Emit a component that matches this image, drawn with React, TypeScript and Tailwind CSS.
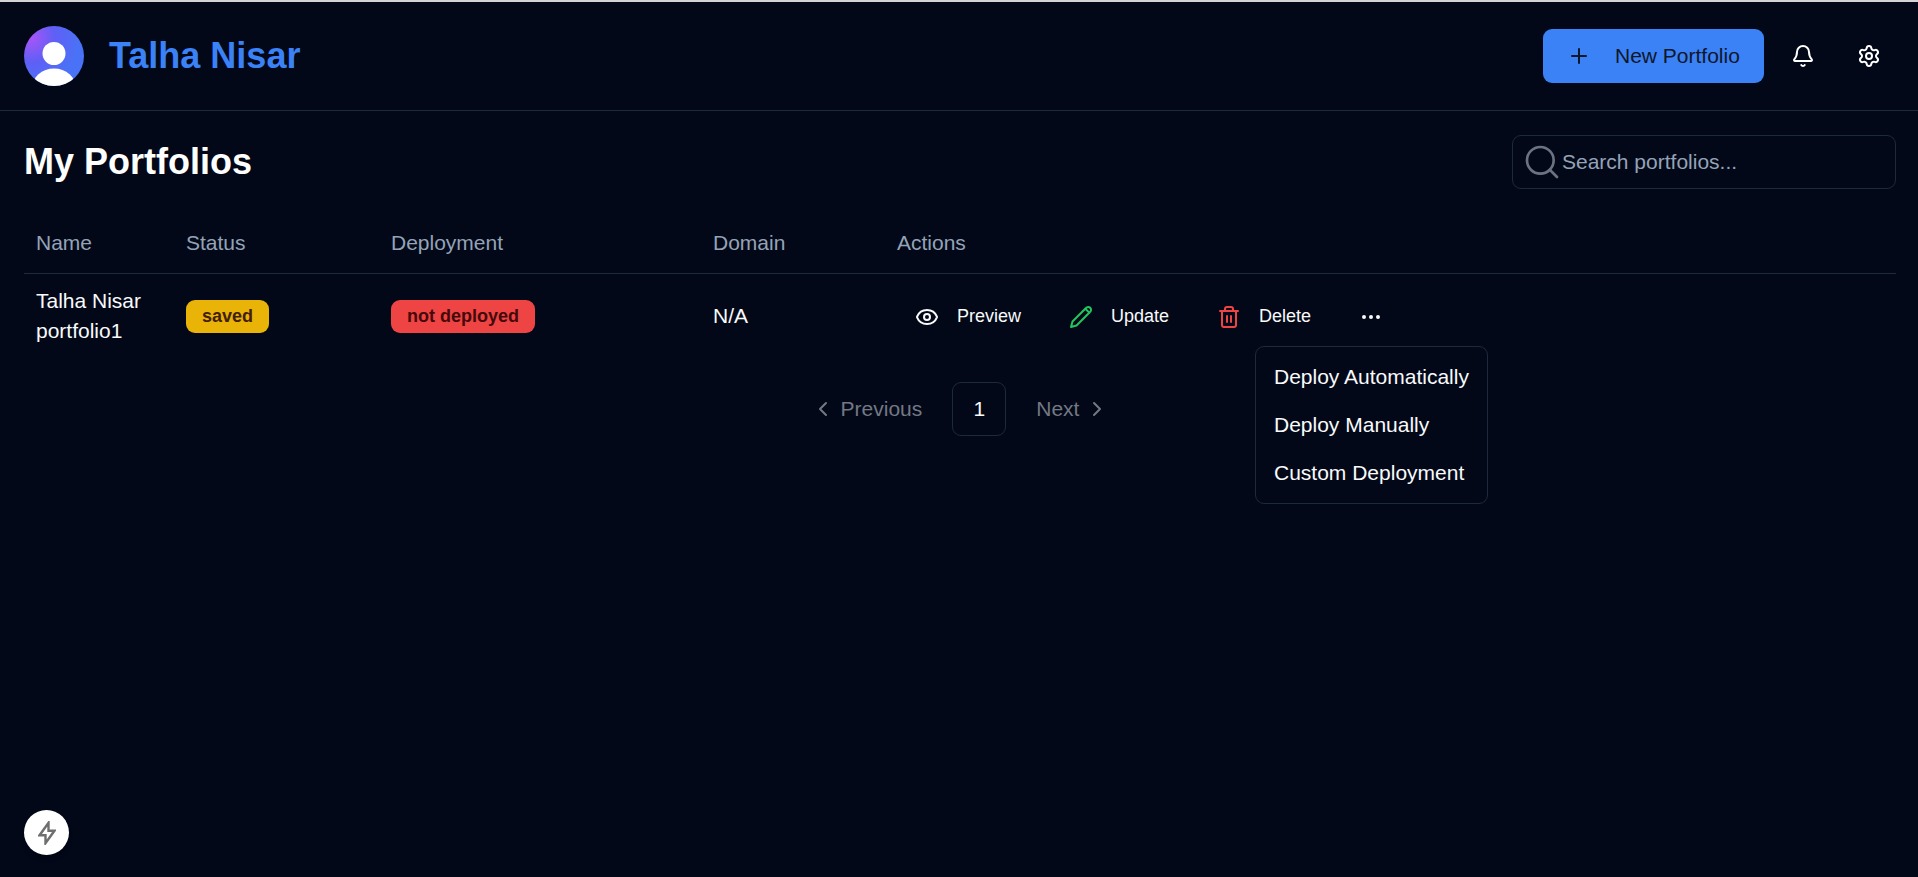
import { Bell, ChevronLeft, ChevronRight, Ellipsis, Eye, Plus, Search, Settings, Trash2 } from "lucide-react";

function Avatar() {
  return (
    <svg width="60" height="60" viewBox="0 0 60 60" className="shrink-0 block">
      <defs>
        <radialGradient id="av" cx="0.12" cy="0.2" r="0.8">
          <stop offset="0" stopColor="#a855f7" />
          <stop offset="0.5" stopColor="#5f5ff6" />
          <stop offset="1" stopColor="#4a72f6" />
        </radialGradient>
        <clipPath id="avc"><circle cx="30" cy="30" r="30" /></clipPath>
      </defs>
      <circle cx="30" cy="30" r="30" fill="url(#av)" />
      <g clipPath="url(#avc)">
        <circle cx="30" cy="27.5" r="11.5" fill="#fff" />
        <ellipse cx="30" cy="62" rx="22" ry="19.5" fill="#fff" />
      </g>
    </svg>
  );
}

function PencilIcon() {
  return (
    <svg width="24" height="24" viewBox="0 0 24 24" fill="none" stroke="#22c55e" strokeWidth="2" strokeLinecap="round" strokeLinejoin="round" className="shrink-0">
      <path d="M17 3a2.85 2.83 0 1 1 4 4L7.5 20.5 2 22l1.5-5.5Z" />
      <path d="m16.6 4 3.4 3.4" />
    </svg>
  );
}

function BoltIcon() {
  return (
    <svg width="18" height="24" viewBox="0 0 18 24" fill="none" stroke="#6f6f6f" strokeWidth="2.4" strokeLinejoin="miter" className="shrink-0">
      <path d="M10.5 1.8V9.8H16.4L7.5 22.2V14.2H1.6Z" />
    </svg>
  );
}

function ActionButton({ icon, label }: { icon: React.ReactNode; label: string }) {
  return (
    <button className="h-[54px] px-[18px] flex items-center gap-[18px] text-[18px] leading-[27px] text-[#f8fafc] rounded-[9px]">
      {icon}
      <span>{label}</span>
    </button>
  );
}

export default function App() {
  return (
    <div className="relative h-[877px] overflow-hidden bg-[#020817] text-[#f8fafc] font-['Liberation_Sans',Arial,sans-serif]">
      <div className="h-[2px] bg-[#d4d4d4]" />
      <header className="h-[109px] pl-[24px] pr-[22px] flex items-center justify-between border-b border-[#1e293b]">
        <div className="flex items-center gap-[25px]">
          <Avatar />
          <h1 className="text-[36px] leading-[54px] font-bold text-[#3b82f6]">Talha Nisar</h1>
        </div>
        <div className="flex items-center gap-[12px]">
          <button className="w-[221px] h-[54px] pl-[24px] flex items-center gap-[24px] rounded-[9px] bg-[#3b82f6] text-[#0f172a] text-[21px] leading-[30px]">
            <Plus size={24} strokeWidth={2} className="shrink-0" />
            <span>New Portfolio</span>
          </button>
          <button className="w-[54px] h-[54px] flex items-center justify-center text-white">
            <Bell size={24} />
          </button>
          <button className="w-[54px] h-[54px] flex items-center justify-center text-white">
            <Settings size={24} />
          </button>
        </div>
      </header>

      <main className="pl-[24px] pr-[22px] pt-[24px]">
        <div className="flex items-center justify-between h-[54px]">
          <h2 className="text-[36px] leading-[54px] font-bold text-white">My Portfolios</h2>
          <div className="w-[384px] h-[54px] rounded-[9px] border border-[#1e293b] flex items-center pl-[9px]">
            <Search size={40} strokeWidth={1.6} className="text-[#6b7280] shrink-0" />
            <span className="text-[21px] leading-[30px] text-[#94a3b8]">Search portfolios...</span>
          </div>
        </div>

        <table className="mt-[24px] w-full table-fixed border-collapse text-[21px] leading-[30px]">
          <colgroup>
            <col className="w-[150px]" />
            <col className="w-[205px]" />
            <col className="w-[322px]" />
            <col className="w-[184px]" />
            <col />
          </colgroup>
          <thead>
            <tr className="h-[60px] border-b border-[#1e293b] text-left text-[#94a3b8]">
              <th className="px-[12px] font-normal">Name</th>
              <th className="px-[12px] font-normal">Status</th>
              <th className="px-[12px] font-normal">Deployment</th>
              <th className="px-[12px] font-normal">Domain</th>
              <th className="px-[12px] font-normal">Actions</th>
            </tr>
          </thead>
          <tbody>
            <tr className="h-[84px]">
              <td className="px-[12px] py-[12px]">Talha Nisar portfolio1</td>
              <td className="px-[12px] pt-[13px] pb-[11px]">
                <span className="inline-flex h-[33px] items-center px-[16px] rounded-[9px] bg-[#eab308] text-[#422006] text-[18px] font-bold leading-[27px]">saved</span>
              </td>
              <td className="px-[12px] pt-[13px] pb-[11px]">
                <span className="inline-flex h-[33px] items-center px-[16px] rounded-[9px] bg-[#ef4444] text-[#450a0a] text-[18px] font-bold leading-[27px]">not deployed</span>
              </td>
              <td className="px-[12px] py-[12px]">N/A</td>
              <td className="px-[12px] pt-[13px] pb-[11px]">
                <div className="relative flex items-center gap-[12px]">
                  <ActionButton icon={<Eye size={24} className="shrink-0" />} label="Preview" />
                  <ActionButton icon={<PencilIcon />} label="Update" />
                  <ActionButton icon={<Trash2 size={24} className="text-[#ef4444] shrink-0" />} label="Delete" />
                  <button className="w-[60px] h-[54px] flex items-center justify-center">
                    <Ellipsis size={24} />
                  </button>
                  <div className="absolute left-[358px] top-[56px] w-[233px] h-[158px] rounded-[9px] border border-[#1e293b] bg-[#020817] px-[18px] py-[6px] text-[21px]">
                    <div className="h-[48px] flex items-center whitespace-nowrap">Deploy Automatically</div>
                    <div className="h-[48px] flex items-center whitespace-nowrap">Deploy Manually</div>
                    <div className="h-[48px] flex items-center whitespace-nowrap">Custom Deployment</div>
                  </div>
                </div>
              </td>
            </tr>
          </tbody>
        </table>

        <nav className="mt-[24px] flex items-center justify-center h-[54px] text-[21px] leading-[30px]">
          <div className="flex items-center gap-[6px] text-[#737884] h-[54px] px-[24px]">
            <ChevronLeft size={24} />
            <span>Previous</span>
          </div>
          <div className="w-[54px] h-[54px] mx-[6px] rounded-[9px] border border-[#1e293b] flex items-center justify-center text-[#f8fafc]">1</div>
          <div className="flex items-center gap-[6px] text-[#737884] h-[54px] px-[24px]">
            <span>Next</span>
            <ChevronRight size={24} />
          </div>
        </nav>
      </main>

      <button className="absolute left-[24px] bottom-[22px] w-[45px] h-[45px] rounded-full bg-white flex items-center justify-center shadow-md">
        <BoltIcon />
      </button>
    </div>
  );
}
